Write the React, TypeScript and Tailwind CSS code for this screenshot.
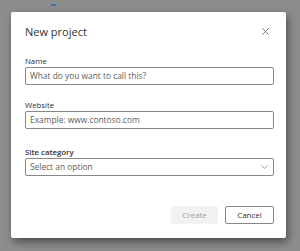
import React from "react";

export default function App() {
  const font = { fontFamily: '"Open Sans", "Noto Sans", Arial, sans-serif' };
  return (
    <div className="relative w-[300px] h-[251px] overflow-hidden bg-[#8d8d8d]" style={font}>
      <div className="absolute left-[51px] top-[4px] w-[5px] h-[2px] bg-[#3b6fb6]" />
      <div className="absolute left-[11px] top-[12px] w-[275px] h-[226px] bg-white rounded-[2px] shadow-[2px_4px_8px_rgba(0,0,0,0.45)] flex flex-col pl-[14px] pr-[12px]">
        <div className="flex items-center justify-between h-[38px]">
          <span className="text-[11px] leading-none text-[#323130]">New project</span>
          <svg width="7" height="7" viewBox="0 0 7 7" className="mr-[5px]">
            <path d="M0.3 0.3 L6.7 6.7 M6.7 0.3 L0.3 6.7" stroke="#605e5c" strokeWidth="0.8" fill="none" />
          </svg>
        </div>
        <div className="mt-[5px] flex flex-col">
          <label className="text-[7.8px] leading-[12px] text-[#323130]">Name</label>
          <div className="h-[18px] border border-[#8a8886] rounded-[2px] flex items-center pl-[4px] text-[8.4px] text-[#605e5c]">
            What do you want to call this?
          </div>
        </div>
        <div className="mt-[14px] flex flex-col">
          <label className="text-[7.8px] leading-[12px] text-[#323130]">Website</label>
          <div className="h-[18px] border border-[#8a8886] rounded-[2px] flex items-center pl-[4px] text-[8.4px] text-[#605e5c]">
            Example: www.contoso.com
          </div>
        </div>
        <div className="mt-[17px] flex flex-col">
          <label className="text-[7.8px] leading-[12px] font-semibold text-[#323130]">Site category</label>
          <div className="h-[18px] border border-[#8a8886] rounded-[2px] flex items-center justify-between pl-[4px] pr-[5px] text-[8.4px] text-[#605e5c]">
            <span>Select an option</span>
            <svg width="7" height="4" viewBox="0 0 7 4">
              <path d="M0.3 0.3 L3.5 3.5 L6.7 0.3" stroke="#8a8886" strokeWidth="0.8" fill="none" />
            </svg>
          </div>
        </div>
        <div className="mt-[30px] flex justify-end gap-[7px]">
          <div className="w-[47px] h-[18px] rounded-[2px] bg-[#f3f2f1] flex items-center justify-center text-[8px] text-[#a19f9d]">
            Create
          </div>
          <div className="w-[49px] h-[18px] rounded-[2px] border border-[#8a8886] bg-white flex items-center justify-center text-[8px] text-[#323130]">
            Cancel
          </div>
        </div>
      </div>
    </div>
  );
}
